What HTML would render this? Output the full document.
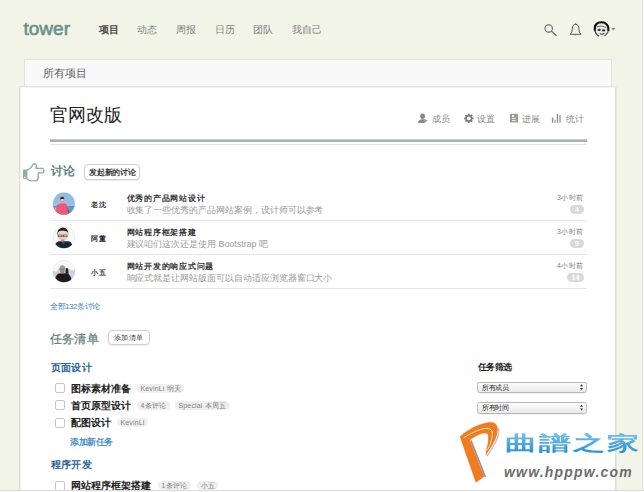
<!DOCTYPE html>
<html><head><meta charset="utf-8">
<style>
*{margin:0;padding:0;box-sizing:border-box}
html,body{width:644px;height:492px;overflow:hidden}
body{background:#f2f4e8;font-family:"Liberation Sans",sans-serif;position:relative;color:#333}
.a{position:absolute;white-space:nowrap;line-height:1}
.nav{font-size:10px;color:#808080}
.logo{left:23.5px;top:19px;font-size:19px;color:#69918a;-webkit-text-stroke:0.6px #69918a}
.back{position:absolute;left:24px;top:59px;width:588px;height:40px;background:#f9f9f9;border:1px solid #e2e3dc}
.card{position:absolute;left:19px;top:86px;width:597px;height:420px;background:#fff;border:1px solid #dadfd2;border-top-color:#e0e3d8;border-radius:1.5px 1.5px 0 0;box-shadow:1px 0 1px rgba(0,0,0,.05),inset 1px 1px 0 #f3f4ef}
.hicon{font-size:9px;color:#8a8a8a}
.btn{position:absolute;border:1px solid #cfcfcf;border-radius:4px;background:#fff;box-shadow:0 1px 1px rgba(0,0,0,.08)}
.sep{position:absolute;left:50px;width:537px;height:1px;background:#e6e6e6}
.name{font-size:7px;font-weight:bold;color:#333;letter-spacing:0.7px}
.ttl{font-size:8px;font-weight:bold;color:#333;letter-spacing:0.75px}
.sub{font-size:9px;color:#9a9a9a;letter-spacing:-0.05px}
.time{font-size:7px;color:#7d7d7d;letter-spacing:0.5px}
.badge{position:absolute;height:9px;border-radius:5px;background:#d9d9d9;color:#fff;font-size:7px;font-weight:bold;text-align:center;line-height:9px}
.cb{position:absolute;left:55px;width:10px;height:10px;border:1px solid #c6c6c6;border-radius:2px;background:#fff}
.task{font-size:10px;font-weight:bold;color:#222;letter-spacing:0.1px}
.tag{position:absolute;height:9px;border-radius:5px;background:#efefef;color:#7f7f7f;font-size:7px;line-height:9px;padding:0 3.5px;letter-spacing:0.15px}
.grp{font-size:10px;font-weight:bold;color:#2c6296;letter-spacing:0.2px}
.sel{position:absolute;left:477px;width:110px;height:11.5px;border:1px solid #b8b8b8;border-radius:2.5px;background:linear-gradient(#fdfdfd,#e9e9e9);font-size:7px;color:#1a1a1a;font-weight:500;line-height:9.5px;padding-left:4px;letter-spacing:-0.4px;box-shadow:0 0.5px 0.5px rgba(0,0,0,.1)}
</style></head><body>

<!-- nav -->
<div class="a logo">tower</div>
<div class="a nav" style="left:99px;top:25px;color:#4a4a4a;font-weight:bold">项目</div>
<div class="a nav" style="left:137px;top:25px">动态</div>
<div class="a nav" style="left:176px;top:25px">周报</div>
<div class="a nav" style="left:215px;top:25px">日历</div>
<div class="a nav" style="left:253px;top:25px">团队</div>
<div class="a nav" style="left:292px;top:25px">我自己</div>

<svg class="a" style="left:540px;top:18px" width="80" height="24" viewBox="540 18 80 24">
  <circle cx="548.7" cy="28.4" r="3.7" fill="none" stroke="#5c5c5c" stroke-width="1.05"/>
  <line x1="551.4" y1="31.1" x2="556.6" y2="35.8" stroke="#5c5c5c" stroke-width="1.15"/>
  <path d="M570.2 34.3 Q572.3 32.8 572.3 29 Q572.3 24.3 575.6 24.3 Q578.9 24.3 578.9 29 Q578.9 32.8 581 34.3 Z" fill="none" stroke="#5c5c5c" stroke-width="1" stroke-linejoin="round"/>
  <circle cx="575.6" cy="23.9" r="0.6" fill="#5c5c5c"/>
  <path d="M574.3 34.8 Q575.6 36.3 576.9 34.8 Z" fill="#5c5c5c"/>
  <circle cx="601.4" cy="29.3" r="8.4" fill="#fff" opacity="0.7"/>
  <circle cx="601.4" cy="29.3" r="7.7" fill="#e6e6e6"/>
  <path d="M595 31 Q593.8 24 599 22.6 Q605.5 21 608 26.5 Q608.6 28.5 608.2 31" fill="none" stroke="#111" stroke-width="2.1"/>
  <path d="M596.5 27 Q601 24.5 606 27.5" fill="none" stroke="#555" stroke-width="0.8"/>
  <ellipse cx="599.2" cy="29.9" rx="1.6" ry="1.1" fill="#333"/>
  <ellipse cx="603.6" cy="30.4" rx="1.6" ry="1.1" fill="#333"/>
  <path d="M594.8 29.5 Q595.3 34 599 36.3" fill="none" stroke="#333" stroke-width="1.2"/>
  <path d="M600 33.6 Q602 35 604.3 33.4" fill="none" stroke="#333" stroke-width="1.1"/>
  <path d="M604.5 36 Q607.5 34 608.3 31" fill="none" stroke="#666" stroke-width="1.2"/>
  <path d="M611.4 28 L615.5 28 L613.45 30.4 Z" fill="#8a8a8a"/>
</svg>

<!-- panels -->
<div class="back"></div>
<div class="a" style="left:43px;top:68px;font-size:11px;color:#5c5c5c">所有项目</div>
<div class="card"></div>

<div class="a" style="left:50px;top:105.5px;font-size:18px;color:#222">官网改版</div>

<!-- header actions -->
<svg class="a" style="left:410px;top:110px" width="180" height="16" viewBox="410 110 180 16">
  <ellipse cx="422.6" cy="116.3" rx="2.4" ry="2.7" fill="#888"/>
  <path d="M418 123 Q418.3 120 421.5 119.3 L423.8 119.3 Q424.6 119.6 424.6 120.5 L424.6 123 Z" fill="#888"/>
  <path d="M424.2 118.8 L427.8 120.8 L424.2 122.9 Z" fill="#9a9a9a"/>
  <g transform="translate(468.8 118.4)">
    <g fill="#7a7a7a">
    <circle r="3.4"/>
    <rect x="-0.9" y="-4.7" width="1.8" height="9.4"/>
    <rect x="-0.9" y="-4.7" width="1.8" height="9.4" transform="rotate(45)"/>
    <rect x="-0.9" y="-4.7" width="1.8" height="9.4" transform="rotate(90)"/>
    <rect x="-0.9" y="-4.7" width="1.8" height="9.4" transform="rotate(135)"/>
    </g>
    <circle r="1.9" fill="#fff"/>
  </g>
  <rect x="510" y="113.8" width="8" height="8.6" fill="#9a9a9a"/>
  <rect x="512" y="115" width="2" height="2" fill="#f4f4f4"/>
  <rect x="512" y="118" width="3.8" height="0.9" fill="#f4f4f4"/>
  <rect x="512" y="120" width="3.8" height="0.9" fill="#f4f4f4"/>
  <rect x="551.9" y="117.6" width="1.4" height="5.2" fill="#8a8a8a"/>
  <rect x="554.3" y="119.8" width="1.5" height="3" fill="#aaa"/>
  <rect x="556.8" y="114" width="1.3" height="8.8" fill="#8a8a8a"/>
  <rect x="559.2" y="115.2" width="1.6" height="7.6" fill="#aaa"/>
</svg>
<div class="a hicon" style="left:431.5px;top:115px">成员</div>
<div class="a hicon" style="left:477px;top:115px">设置</div>
<div class="a hicon" style="left:521.5px;top:115px">进展</div>
<div class="a hicon" style="left:566px;top:115px">统计</div>

<div class="a" style="left:50px;top:139px;width:537px;height:1px;background:#c4ced1"></div>
<div class="a" style="left:50px;top:140px;width:537px;height:2px;background:#a3b3b7"></div>
<div class="a" style="left:50px;top:144px;width:537px;height:1px;background:#dfe5e6"></div>

<!-- discussion -->
<svg class="a" style="left:22px;top:161px" width="24" height="22" viewBox="22 161 24 22">
  <rect x="23" y="169.4" width="4.4" height="9.7" rx="0.8" fill="#8fb0a8"/>
  <rect x="24" y="176.8" width="1.4" height="1.2" fill="#fff"/>
  <path d="M27.6 169.8 Q29.6 169.2 30.8 167.8 L33.1 164.5 Q34 163.4 35.2 163.8 Q36.5 164.4 36.3 165.9 L35.9 168.4 L42.4 168.4 Q43.9 168.7 43.9 170.6 Q43.8 172.7 42.4 172.9 L38.3 172.9 L38.1 178.2 Q37.8 180.8 35.2 180.9 L30.4 180.6 Q28.7 180.3 27.6 179.2" fill="none" stroke="#8fb0a8" stroke-width="1.4" stroke-linejoin="round" stroke-linecap="round"/>
</svg>
<div class="a" style="left:50.5px;top:165px;font-size:12px;color:#5a847f;font-weight:bold;letter-spacing:0px">讨论</div>
<div class="btn" style="left:84px;top:164px;width:56px;height:15.5px"></div>
<div class="a" style="left:89px;top:168.5px;font-size:8px;font-weight:bold;color:#3a3a3a;letter-spacing:-0.25px">发起新的讨论</div>

<!-- avatars -->
<svg class="a" style="left:50px;top:188px" width="30" height="100" viewBox="50 188 30 100">
  <defs>
    <clipPath id="c1"><circle cx="63.9" cy="203.6" r="11"/></clipPath>
    <clipPath id="c2"><circle cx="63.9" cy="237.3" r="11"/></clipPath>
    <clipPath id="c3"><circle cx="63.9" cy="271.3" r="11"/></clipPath>
    <linearGradient id="sky" x1="0" y1="0" x2="0" y2="1"><stop offset="0" stop-color="#8bb8e0"/><stop offset="1" stop-color="#a4cae8"/></linearGradient>
  </defs>
  <g clip-path="url(#c1)">
    <rect x="50" y="190" width="30" height="30" fill="url(#sky)"/>
    <rect x="50" y="206" width="30" height="10" fill="#5f98c2"/>
    <path d="M66.5 206 L69.5 212.5 L68.3 213 L65.5 208 Z" fill="#6b4a3c"/>
    <path d="M54.5 216 L54.8 211 Q55.5 206 58.5 204.2 L61 203.6 L65.5 203.6 Q67.4 204.5 67.6 207.5 L67.8 216 Z" fill="#f2557d"/>
    <path d="M55.5 207 L53.5 212 L54.5 212.8 L56.5 209 Z" fill="#e9a08a"/>
    <ellipse cx="62.2" cy="200.6" rx="1.9" ry="2.4" fill="#d9a08e"/>
    <path d="M60.2 199.6 Q60 196.8 62.2 196.8 Q64.4 196.8 64.2 199.6 Q62.2 198.4 60.2 199.6 Z" fill="#3a2520"/>
    <ellipse cx="62.4" cy="199.9" rx="1.2" ry="0.8" fill="#f6eeee"/>
  </g>
  <g clip-path="url(#c2)">
    <rect x="50" y="224" width="30" height="30" fill="#f6f8f9"/>
    <path d="M53 250 Q54.5 243 58.5 241.3 L69 241.3 Q72.5 243 74.5 250 Z" fill="#1a2633"/>
    <path d="M61 241.3 L63.3 244.5 L66 241.3 Z" fill="#3a4a5a"/>
    <ellipse cx="62.6" cy="235.6" rx="5" ry="6" fill="#efcfc4"/>
    <path d="M57.3 236 Q56.5 228.6 62.6 227.6 Q68.8 227.6 68.2 235.2 L67.6 232 Q66 230.8 62.6 230.6 Q59 230.8 58 232.2 Z" fill="#1f1f1f"/>
    <rect x="58.2" y="235" width="3.7" height="1.8" fill="none" stroke="#444" stroke-width="0.6"/>
    <rect x="63.3" y="235" width="3.7" height="1.8" fill="none" stroke="#444" stroke-width="0.6"/>
    <rect x="61.5" y="235.6" width="2" height="0.5" fill="#444"/>
    <ellipse cx="62.6" cy="240.2" rx="1.8" ry="0.6" fill="#c46a60"/>
  </g>
  <g clip-path="url(#c3)">
    <rect x="50" y="258" width="30" height="30" fill="#f7f9fb"/>
    <path d="M50 276 L53 270.5 L56 272 L59 268.5 L63 271 L68 268 L72 270.5 L78 269 L78 278 L50 278 Z" fill="#c6d3e0"/>
    <path d="M54 284 Q55 275.5 58.5 273.6 L67 273.2 Q71 274.5 73 284 Z" fill="#1b1b1b"/>
    <path d="M65.5 273.5 L65.8 268.5 Q66.8 267.6 68 268.6 L68.6 274 Z" fill="#1e1e1e"/>
    <ellipse cx="62.3" cy="270.6" rx="2.5" ry="2.9" fill="#b88668"/>
    <path d="M59.6 269.2 Q59.4 265.4 62.5 265.3 Q65.4 265.4 65.2 269 Z" fill="#8e9fb6"/>
    <rect x="59.3" y="268.5" width="6.2" height="1" fill="#6d7d92"/>
  </g>
  <circle cx="63.9" cy="237.3" r="10.9" fill="none" stroke="rgba(0,0,0,.07)" stroke-width="0.8"/>
  <circle cx="63.9" cy="271.3" r="10.9" fill="none" stroke="rgba(0,0,0,.07)" stroke-width="0.8"/>
</svg>

<div class="a name" style="left:91px;top:200.5px">老沈</div>
<div class="a ttl" style="left:126.5px;top:195px">优秀的产品网站设计</div>
<div class="a sub" style="left:126.5px;top:205.5px">收集了一些优秀的产品网站案例，设计师可以参考</div>
<div class="a time" style="left:557px;top:194px">3小时前</div>
<div class="badge" style="left:570px;top:205px;width:14px">4</div>
<div class="sep" style="top:220px"></div>

<div class="a name" style="left:91px;top:234.5px">阿董</div>
<div class="a ttl" style="left:126.5px;top:229px">网站程序框架搭建</div>
<div class="a sub" style="left:126.5px;top:239.5px">建议咱们这次还是使用 Bootstrap 吧</div>
<div class="a time" style="left:557px;top:228px">3小时前</div>
<div class="badge" style="left:570px;top:239px;width:14px">9</div>
<div class="sep" style="top:254px"></div>

<div class="a name" style="left:91px;top:268.5px">小五</div>
<div class="a ttl" style="left:126.5px;top:263px">网站开发的响应式问题</div>
<div class="a sub" style="left:126.5px;top:273.5px">响应式就是让网站版面可以自动适应浏览器窗口大小</div>
<div class="a time" style="left:557px;top:262px">4小时前</div>
<div class="badge" style="left:567px;top:273px;width:17px">14</div>
<div class="sep" style="top:288px"></div>

<div class="a" style="left:50px;top:302.5px;font-size:8px;color:#3a86b6;font-weight:500;letter-spacing:-0.45px">全部132条讨论</div>

<!-- tasks -->
<div class="a" style="left:50px;top:333px;font-size:12px;color:#5f807b;font-weight:500;letter-spacing:0.2px;-webkit-text-stroke:0.25px #5f807b">任务清单</div>
<div class="btn" style="left:108px;top:330px;width:42px;height:15px"></div>
<div class="a" style="left:113.5px;top:333.5px;font-size:7px;color:#333;letter-spacing:0.65px;font-weight:500">添加清单</div>

<div class="a grp" style="left:51px;top:362.5px">页面设计</div>

<div class="cb" style="top:383px"></div>
<div class="a task" style="left:70.5px;top:384px">图标素材准备</div>
<div class="tag" style="left:137px;top:384px">KevinLi 明天</div>

<div class="cb" style="top:400px"></div>
<div class="a task" style="left:70.5px;top:401px">首页原型设计</div>
<div class="tag" style="left:137px;top:401px">4条评论</div>
<div class="tag" style="left:175px;top:401px">Special 本周五</div>

<div class="cb" style="top:417.5px"></div>
<div class="a task" style="left:70.5px;top:418px">配图设计</div>
<div class="tag" style="left:117px;top:418px">KevinLi</div>

<div class="a" style="left:70px;top:437.5px;font-size:9px;color:#4a92c4;letter-spacing:-0.5px;font-weight:bold">添加新任务</div>

<div class="a grp" style="left:51px;top:459.5px">程序开发</div>

<div class="cb" style="top:481px"></div>
<div class="a task" style="left:70.5px;top:481px">网站程序框架搭建</div>
<div class="tag" style="left:158px;top:481px">1条评论</div>
<div class="tag" style="left:197px;top:481px">小五</div>

<!-- filter -->
<div class="a" style="left:477.5px;top:363px;font-size:9px;font-weight:bold;color:#222;letter-spacing:-0.5px">任务筛选</div>
<div class="sel" style="top:381.5px">所有成员</div>
<div class="sel" style="top:402px">所有时间</div>
<svg class="a" style="left:578px;top:380px" width="8" height="36" viewBox="578 380 8 36">
  <path d="M580 386.3 L583 386.3 L581.5 384.3 Z M580 388 L583 388 L581.5 390 Z" fill="#222"/>
  <path d="M580 406.8 L583 406.8 L581.5 404.8 Z M580 408.5 L583 408.5 L581.5 410.5 Z" fill="#222"/>
</svg>
<!-- watermark -->
<svg class="a" style="left:450px;top:415px" width="194" height="77" viewBox="450 415 194 77">
  <defs><filter id="bl" x="-50%" y="-50%" width="200%" height="200%"><feGaussianBlur stdDeviation="0.6"/></filter></defs>
  <path d="M470.8 440.3 L485.4 477.2" stroke="#333" stroke-width="1.8" opacity="0.5" filter="url(#bl)"/>
  <polyline points="498.4,427.5 498.8,431.0 498.0,436.0 496.0,441.5 492.7,447.5 489.7,452.0 487.0,456.3" fill="none" stroke="#444" stroke-width="1.2" opacity="0.35" filter="url(#bl)"/>
  <polygon points="459.9,437 469.8,440.1 484.2,476.6 475.9,482.7" fill="#f07c1f"/>
  <polygon points="459.9,437 463.5,433.5 468.3,430.2 473.5,427.2 478.9,424.9 484.5,423.2 489.6,422.3 493,422.5 495.5,423.8 497.2,426.5 497.6,430 496.8,435 494.8,440.5 491.5,446.5 488.5,451 485.8,455.3 486.6,449 487.8,444 488.3,439 488.2,435.5 487.3,433.6 485.5,433.1 482,433.4 477.5,435.2 473,437.8 469.8,440 466,442.3" fill="#f07c1f" stroke="#f07c1f" stroke-width="0.3" stroke-linejoin="round"/>
  <polyline points="463.5,437.8 469,434.5 476.5,430.8 482.5,428.8 487,428.3 490.2,429 492,431 492.4,434.5 491.7,439.5 489.8,445.4 487.6,449.6" fill="none" stroke="#fff" stroke-width="0.8" opacity="0.95" stroke-linejoin="round"/>
</svg>
<div class="a" style="left:505px;top:433px;font-size:20px;color:#3aa0e2;background:linear-gradient(#72c2ee,#2a8fd6);-webkit-background-clip:text;background-clip:text;-webkit-text-fill-color:transparent;transform-origin:0 0;transform:scaleX(1.6);letter-spacing:1.25px;font-weight:bold">曲譜之家</div>
<div class="a" style="left:504px;top:465px;font-size:14px;font-weight:bold;font-style:italic;color:#6d6d6d;letter-spacing:1.2px">www.hpppw.com</div>

<!-- frame edges -->
<div class="a" style="left:642px;top:0;width:1px;height:492px;background:#e2e3d8"></div>
<div class="a" style="left:0;top:490px;width:644px;height:1px;background:#dcdcdc"></div>
<div class="a" style="left:0;top:491px;width:644px;height:1px;background:#f9f9f9"></div>
</body></html>
